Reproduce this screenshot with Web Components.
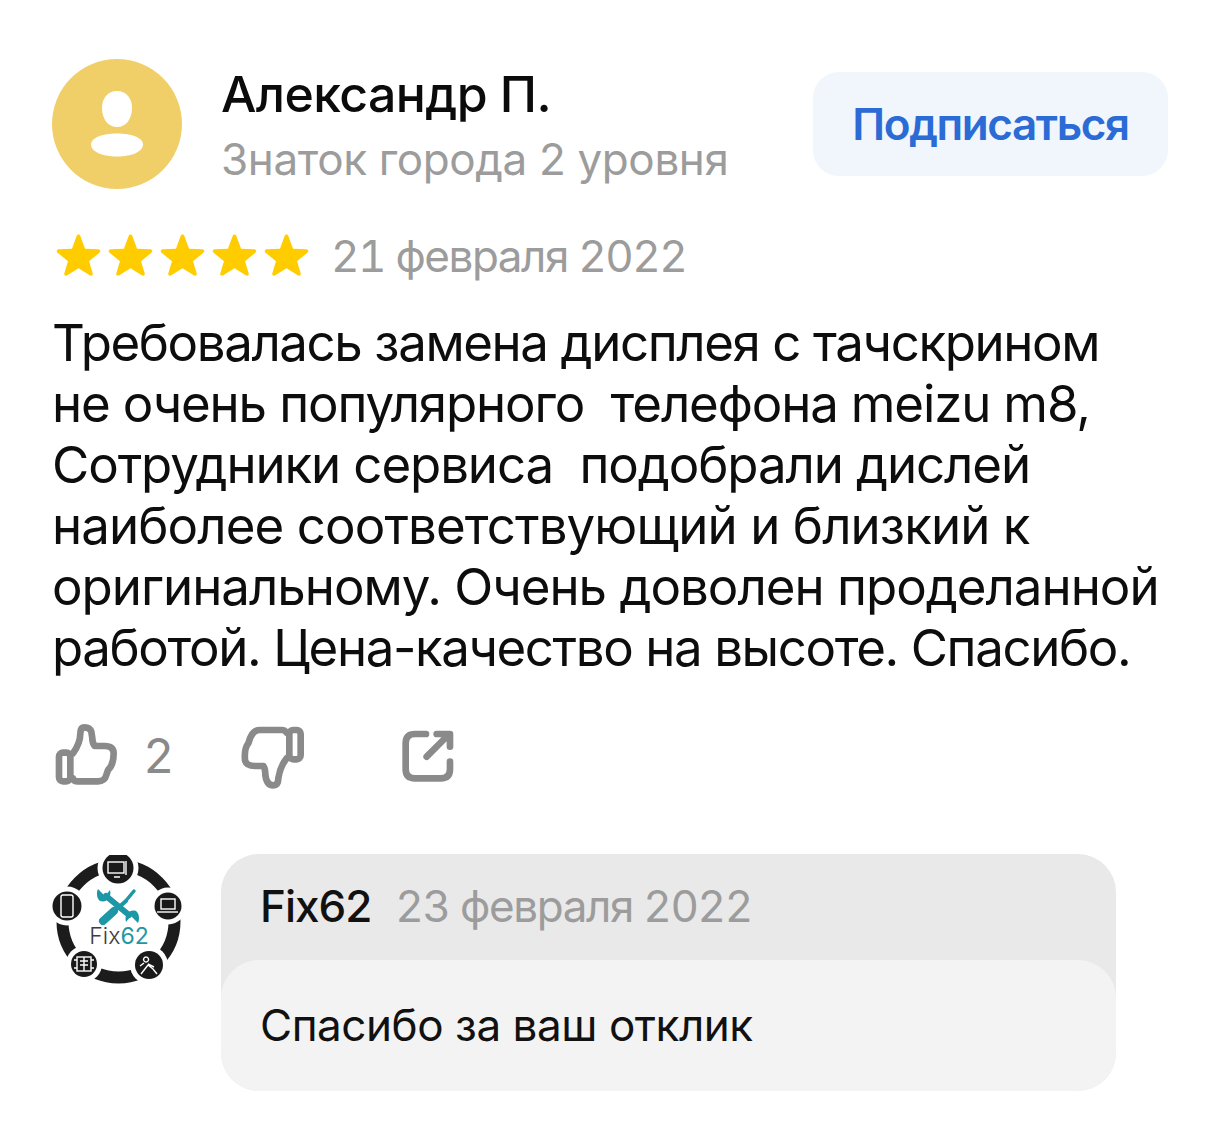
<!DOCTYPE html>
<html lang="ru"><head><meta charset="utf-8"><style>
html,body{margin:0;background:#fff}
body{font-family:"Inter","Noto Sans",sans-serif;width:1220px;height:1135px;overflow:hidden}
</style></head><body>
<review-page>
<review-header name="Александр П." level="Знаток города 2 уровня"></review-header>
<review-meta date="21 февраля 2022"></review-meta>
<review-text>
<review-line style="letter-spacing:-1.4px">Требовалась замена дисплея с тачскрином</review-line>
<review-line style="letter-spacing:-1.15px">не очень популярного  телефона meizu m8,</review-line>
<review-line style="letter-spacing:-1.1px">Сотрудники сервиса  подобрали дислей</review-line>
<review-line style="letter-spacing:-.9px">наиболее соответствующий и близкий к</review-line>
<review-line style="letter-spacing:-1px">оригинальному. Очень доволен проделанной</review-line>
<review-line style="letter-spacing:-1.4px">работой. Цена-качество на высоте. Спасибо.</review-line>
</review-text>
<review-actions likes="2"></review-actions>
<owner-reply name="Fix62" date="23 февраля 2022">Спасибо за ваш отклик</owner-reply>
</review-page>
<script>
const F='"Inter","Roboto",sans-serif';
function def(name,html){customElements.define(name,class extends HTMLElement{
 connectedCallback(){ if(this.shadowRoot)return; const r=this.attachShadow({mode:'open'}); r.innerHTML=html(this);}
});}
def('review-page',()=>`<style>:host{display:flex;flex-direction:column;padding:59px 52px 0;box-sizing:border-box;width:1220px;font-family:${F};color:#000}</style><slot></slot>`);
def('review-header',e=>`<style>
:host{display:flex;align-items:flex-start}
.av{width:130px;height:130px;flex:none}
.t{margin-left:39px;flex:1;display:flex;flex-direction:column}
.n{font-size:50px;line-height:56px;font-weight:500;letter-spacing:-.6px;margin-top:7px;color:#0b0b0b}
.l{font-size:44px;line-height:56px;color:#9c9c9c;letter-spacing:-.37px;margin-top:9px}
.b{width:355px;height:104px;border-radius:26px;background:#f1f5fc;color:#2a6bd6;font-size:44px;font-weight:600;letter-spacing:-1.4px;display:flex;align-items:center;justify-content:center;margin:13px 0 0;flex:none}
</style>
<svg class="av" viewBox="0 0 130 130"><circle cx="65" cy="65" r="65" fill="#f0cf68"/><path d="M65 32c10 0 15 8 15 17 0 11-6 19-15 19s-15-8-15-19c0-9 5-17 15-17z" fill="#fff"/><path d="M65 74.500c15 0 26 4.500 26 11 0 7-11 12-26 12s-26-5-26-12c0-6.500 11-11 26-11z" fill="#fff"/></svg>
<div class="t"><div class="n">${e.getAttribute('name')}</div><div class="l">${e.getAttribute('level')}</div></div>
<div class="b" role="button">Подписаться</div>`);
def('review-meta',e=>{const star='<svg viewBox="0 0 46 44" width="45" height="43"><path d="M23 1.500c1 0 1.600.7 2 1.700l4.700 12.800 13.400.6c2.300.1 3 2.200 1.300 3.500L33.800 29l3.700 12.300c.6 2-1.300 3.200-3 2L23 36l-11.500 7.300c-1.700 1.200-3.600 0-3-2L12.200 29 1.600 20.100C-.1 18.800.600 16.700 2.900 16.600L16.300 16 21 3.200c.4-1 1-1.700 2-1.700z" fill="#fc0"/></svg>';
return `<style>:host{display:flex;align-items:center;margin-top:39px;height:56px}
.s{display:flex;gap:7px;margin-left:4px;margin-right:22px;margin-bottom:4px}
svg{display:block}
.d{font-size:44px;color:#9c9c9c;letter-spacing:-1.47px;font-variant-numeric:tabular-nums}</style>
<div class="s">${star.repeat(5)}</div><div class="d">${e.getAttribute('date')}</div>`});
def('review-text',()=>`<style>:host{display:block;font-size:51px;line-height:61px;margin-top:28px;color:#0d0d0d}</style><slot></slot>`);
def('review-line',()=>`<style>:host{display:block;white-space:pre}</style><slot></slot>`);
def('review-actions',e=>`<style>:host{display:flex;align-items:center;margin-top:42px;height:70px}
svg{display:block;flex:none;height:70px;fill:none;stroke:#8a8a8a;stroke-width:20;stroke-linejoin:round;stroke-linecap:round}
.c{font-size:48px;font-weight:400;margin-left:24px;width:96px;color:#8a8a8a}
</style>
<svg width="66.670" style="margin-left:1.330px" viewBox="40 30 200 210"><rect x="58" y="128" width="34" height="86" rx="12"/><path d="M100 205Q102 214 112 214H175Q195 214 200 195L205 180Q222 165 222 130Q222 108 195 108H165Q158 100 158 85L155 65Q150 52 135 52Q122 52 122 70Q122 100 100 130"/></svg>
<div class="c">${e.getAttribute('likes')}</div>
<svg width="66.670" viewBox="600 30 200 210"><rect x="748" y="60" width="34" height="88" rx="12"/><path d="M740 68Q735 60 725 60H660Q640 60 630 85L625 100Q612 115 615 150Q618 168 645 168H670Q676 175 676 195Q680 226 700 226Q715 226 715 205Q720 170 740 145"/></svg>
<svg width="56.670" style="margin-left:93.330px" viewBox="1080 30 170 210"><path d="M1158 72H1125Q1097 72 1097 100V177Q1097 205 1125 205H1202Q1230 205 1230 177V155M1160 140L1225 75M1190 72H1230V110"/></svg>`);
def('owner-reply',e=>{
const badge=(x,y,r)=>`<circle cx="${x}" cy="${y}" r="${r+5}" fill="#fff"/><circle cx="${x}" cy="${y}" r="${r}" fill="#1a1a1a"/>`;
return `<style>:host{display:flex;align-items:flex-start;margin-top:64px;margin-right:52px}
.logo{width:132px;height:132px;flex:none;margin:1px 37px 0 0}
.box{flex:1;border-radius:38px;background:#e9e9e9;display:flex;flex-direction:column;height:237px;overflow:hidden}
.h{height:106px;display:flex;align-items:center;padding:0 0 2px 39px;box-sizing:border-box}
.n{font-size:44px;font-weight:500;letter-spacing:-1px;color:#111}
.d{font-size:44px;color:#9c9c9c;letter-spacing:-1.4px;margin-left:24px;font-variant-numeric:tabular-nums}
.b{flex:1;background:#f3f3f3;border-radius:38px;padding:0 0 2px 39px;font-size:44px;letter-spacing:-.45px;display:flex;align-items:center;color:#111}
</style>
<svg class="logo" viewBox="0 0 132 132">
<circle cx="66.500" cy="66.500" r="56" fill="none" stroke="#1c1c1c" stroke-width="12"/>
${badge(66,13,15.500)}${badge(116,51,13.500)}${badge(15,51,14.500)}${badge(32,109,13)}${badge(97,110,14)}
<g fill="none" stroke="#fff" stroke-width="1.400"><rect x="56" y="7" width="16" height="11"/><path d="M62 22h6M74 6v14"/><rect x="9" y="40" width="12" height="22" rx="2"/><rect x="109" y="44" width="14" height="10"/><path d="M105 57h21"/><rect x="25" y="102" width="14" height="14"/><path d="M28 106h8M28 110h8M32 102v14M22 105h3M22 113h3M39 105h3M39 113h3"/><path d="M89 119l7-9 5 4 4 5M94 102a2.500 2.500 0 1 0 .1 0M92 108l-4 3M96 109l6 3"/></g>
<g stroke="#1d97a6" fill="none" stroke-linecap="round"><path d="M54 41L77 60" stroke-width="6"/><path d="M52 65L74 46" stroke-width="4"/><path d="M51 66L62 56" stroke-width="8"/><path d="M72 48L82 36" stroke-width="3.500"/></g>
<path d="M46 34l7 7 5-6c2 7-3 13-10 11-3-2-4-8-2-12zM86 68l-7-7-5 6c-2-7 3-13 10-11 3 2 4 8 2 12z" fill="#1d97a6"/>
<text x="67" y="89" text-anchor="middle" font-family="Inter,sans-serif" font-size="23" font-weight="300" fill="#3c3c3c">Fix<tspan fill="#1d97a6" font-weight="400">62</tspan></text>
</svg>
<div class="box"><div class="h"><span class="n">${e.getAttribute('name')}</span><span class="d">${e.getAttribute('date')}</span></div><div class="b"><slot></slot></div></div>`});
</script>
</body></html>
